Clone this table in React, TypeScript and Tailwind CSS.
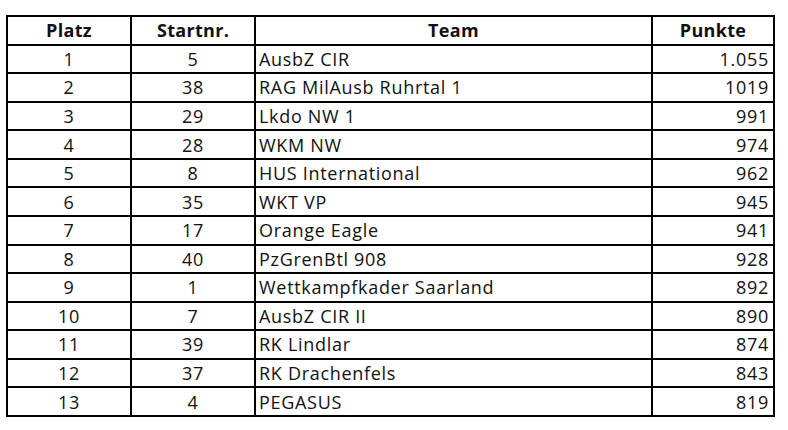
import React from "react";

const rows: [string, string, string, string][] = [
  ["1", "5", "AusbZ CIR", "1.055"],
  ["2", "38", "RAG MilAusb Ruhrtal 1", "1019"],
  ["3", "29", "Lkdo NW 1", "991"],
  ["4", "28", "WKM NW", "974"],
  ["5", "8", "HUS International", "962"],
  ["6", "35", "WKT VP", "945"],
  ["7", "17", "Orange Eagle", "941"],
  ["8", "40", "PzGrenBtl 908", "928"],
  ["9", "1", "Wettkampfkader Saarland", "892"],
  ["10", "7", "AusbZ CIR II", "890"],
  ["11", "39", "RK Lindlar", "874"],
  ["12", "37", "RK Drachenfels", "843"],
  ["13", "4", "PEGASUS", "819"],
];

export default function App() {
  return (
    <div className="w-[788px] h-[430px] bg-white pt-[15px] pl-[6px] font-['Open_Sans',sans-serif] text-[18px] tracking-[0.7px] text-[#111] leading-none">
      <div className="grid grid-cols-[122px_122px_395px_120px] auto-rows-[26.57px] gap-[2px] bg-black p-[2px] w-[769px]">
        <div className="bg-white flex items-center justify-center font-bold tracking-[0.3px]">Platz</div>
        <div className="bg-white flex items-center justify-center font-bold tracking-[0.3px]">Startnr.</div>
        <div className="bg-white flex items-center justify-center font-bold tracking-[0.3px]">Team</div>
        <div className="bg-white flex items-center justify-center font-bold tracking-[0.3px]">Punkte</div>
        {rows.map((r) => (
          <React.Fragment key={r[0]}>
            <div className="bg-white flex items-center justify-center">{r[0]}</div>
            <div className="bg-white flex items-center justify-center">{r[1]}</div>
            <div className="bg-white flex items-center pl-[3px]">{r[2]}</div>
            <div className="bg-white flex items-center justify-end pr-[4px]">{r[3]}</div>
          </React.Fragment>
        ))}
      </div>
    </div>
  );
}
